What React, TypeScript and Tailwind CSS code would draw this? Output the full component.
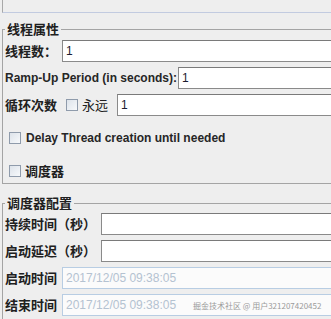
import React from 'react';

const cjk = "font-['Noto_Sans_CJK_SC',sans-serif]";
const latin = "font-['Liberation_Sans','Noto_Sans_CJK_SC',sans-serif]";

function Check() {
  return (
    <span className="inline-block w-[12px] h-[12px] shrink-0 border border-[#8f9bab] bg-gradient-to-br from-[#dde3ea] to-[#f7f9fb]" />
  );
}

function Field({ value, disabled, children }: { value?: string; disabled?: boolean; children?: React.ReactNode }) {
  return (
    <div
      className={
        'relative flex-1 h-[22px] flex items-center pl-[3px] text-[12px] ' +
        latin +
        (disabled
          ? ' border border-[#b8cde3] bg-[#fbfbfb] text-[#b4c2d1]'
          : ' border border-[#8a8a8a] border-t-[#7a7a7a] bg-white text-[#1c1c30]')
      }
    >
      {value}
      {children}
    </div>
  );
}

function Row({ label, labelW, children }: { label: string; labelW: string; children: React.ReactNode }) {
  return (
    <div className="flex items-center">
      <span className={'shrink-0 text-[13px] leading-[16px] font-bold text-[#202020] ' + cjk + ' ' + labelW}>{label}</span>
      {children}
    </div>
  );
}

// titled border, drawn as a title row plus a three-sided box
function Group({ title, className, bodyClass, children }: { title: string; className: string; bodyClass: string; children: React.ReactNode }) {
  return (
    <div className={'ml-[2px] ' + className}>
      <div className="flex h-[16px]">
        <span className="mt-[8px] w-[3px] border-l border-t border-[#a4a4a4]" />
        <span className={'px-[2px] text-[13px] leading-[16px] font-bold text-[#202020] ' + cjk}>{title}</span>
        <span className="mt-[8px] flex-1 border-t border-r border-[#a4a4a4]" />
      </div>
      <div className={'border-l border-r border-b border-[#a4a4a4] pl-[2px] ' + bodyClass}>{children}</div>
    </div>
  );
}

export default function App() {
  return (
    <div className="w-full h-[319px] overflow-hidden bg-[#eeeeee]">
      <div className="w-[380px]">
        <div className="h-[13px] ml-[2px] border-l border-l-[#a8a8a8] border-b border-b-[#c2cbe0]" />

        <Group title="线程属性" className="mt-[8px]" bodyClass="pt-[3px]">
          <div className="flex flex-col gap-[5px]">
            <Row label="线程数：" labelW="w-[57px]">
              <Field value="1" />
            </Row>
            <div className="flex items-center">
              <span className={'shrink-0 w-[173px] text-[12px] font-bold text-[#262626] ' + latin}>Ramp-Up Period (in seconds):</span>
              <Field value="1" />
            </div>
            <Row label="循环次数" labelW="w-[61px]">
              <Check />
              <span className={'ml-[4px] w-[35px] shrink-0 text-[13px] leading-[16px] text-[#202020] ' + cjk}>永远</span>
              <Field value="1" />
            </Row>
          </div>
          <div className="mt-[10px] h-[24px] flex items-center pl-[4px]">
            <Check />
            <span className={'ml-[5px] text-[12px] font-bold text-[#262626] ' + latin}>Delay Thread creation until needed</span>
          </div>
          <div className="mt-[9px] h-[24px] flex items-center pl-[4px]">
            <Check />
            <span className={'ml-[4px] text-[13px] leading-[16px] font-bold text-[#202020] ' + cjk}>调度器</span>
          </div>
        </Group>

        <Group title="调度器配置" className="mt-[11px]" bodyClass="pt-[2px] pb-[4px]">
          <div className="flex flex-col gap-[5px]">
            <Row label="持续时间（秒）" labelW="w-[96px]">
              <Field />
            </Row>
            <Row label="启动延迟（秒）" labelW="w-[96px]">
              <Field />
            </Row>
            <Row label="启动时间" labelW="w-[57px]">
              <Field value="2017/12/05 09:38:05" disabled />
            </Row>
            <Row label="结束时间" labelW="w-[57px]">
              <Field value="2017/12/05 09:38:05" disabled>
                <span className={'absolute left-[130px] top-[6px] text-[8px] leading-[10px] text-[#9a9a9a] ' + cjk}>
                  掘金技术社区 @ 用户321207420452
                </span>
              </Field>
            </Row>
          </div>
        </Group>
      </div>
    </div>
  );
}
